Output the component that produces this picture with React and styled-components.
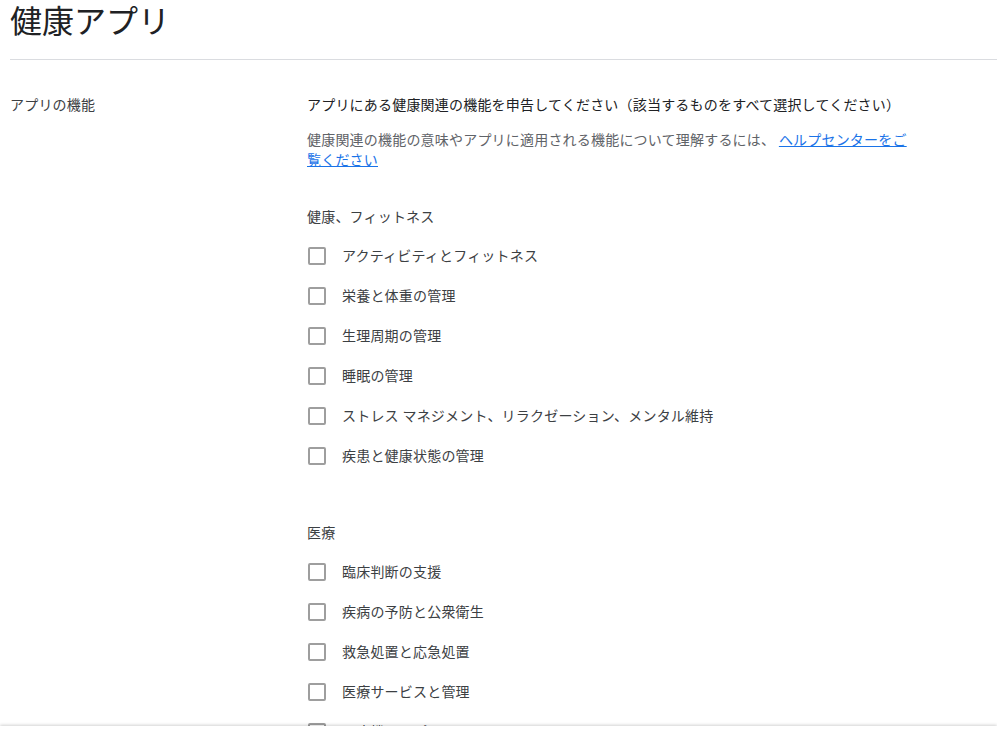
import React, { useState } from "react";
import styled, { createGlobalStyle } from "styled-components";

const GlobalStyle = createGlobalStyle`
  body {
    margin: 0;
    background: #fff;
    font-family: Roboto, "Noto Sans CJK JP", sans-serif;
    color: #202124;
  }
`;

const groups = [
  {
    title: "健康、フィットネス",
    items: [
      "アクティビティとフィットネス",
      "栄養と体重の管理",
      "生理周期の管理",
      "睡眠の管理",
      "ストレス マネジメント、リラクゼーション、メンタル維持",
      "疾患と健康状態の管理",
    ],
  },
  {
    title: "医療",
    items: [
      "臨床判断の支援",
      "疾病の予防と公衆衛生",
      "救急処置と応急処置",
      "医療サービスと管理",
      "医療機器アプリ",
    ],
  },
];

export default function App() {
  const [checked, setChecked] = useState({});
  const toggle = (key) => setChecked((c) => ({ ...c, [key]: !c[key] }));

  return (
    <>
      <GlobalStyle />
      <Page>
        <Header>
          <h1>健康アプリ</h1>
        </Header>
        <Section>
          <Label>アプリの機能</Label>
          <Content>
            <Lead>
              アプリにある健康関連の機能を申告してください（該当するものをすべて選択してください）
            </Lead>
            <Help>
              健康関連の機能の意味やアプリに適用される機能について理解するには、{" "}
              <a href="#help">ヘルプセンターをご覧ください</a>
            </Help>
            {groups.map((group, gi) => (
              <Group key={group.title} $first={gi === 0}>
                <GroupTitle>{group.title}</GroupTitle>
                {group.items.map((item) => {
                  const key = group.title + item;
                  return (
                    <Option key={key} onClick={() => toggle(key)}>
                      <Box $checked={!!checked[key]} />
                      <span>{item}</span>
                    </Option>
                  );
                })}
              </Group>
            ))}
          </Content>
        </Section>
      </Page>
      <Footer />
    </>
  );
}

const Page = styled.div`
  padding: 0 0 60px 10px;
`;

const Header = styled.div`
  height: 59px;
  border-bottom: 1px solid #dadce0;
  h1 {
    margin: 0;
    font-size: 32px;
    font-weight: 400;
    line-height: 44px;
    color: #202124;
  }
`;

const Section = styled.div`
  display: grid;
  grid-template-columns: 297px 608px;
  padding-top: 35px;
  font-size: 14px;
  line-height: 20px;
  letter-spacing: 0.2px;
  color: #3c4043;
`;

const Label = styled.div`
  color: #3c4043;
`;

const Content = styled.div`
  display: flex;
  flex-direction: column;
`;

const Lead = styled.p`
  margin: 0;
  color: #202124;
`;

const Help = styled.p`
  margin: 15px 0 0;
  color: #5f6368;
  a {
    color: #1a73e8;
    text-decoration: underline;
  }
`;

const Group = styled.div`
  margin-top: ${(p) => (p.$first ? "37px" : "47px")};
  display: flex;
  flex-direction: column;
`;

const GroupTitle = styled.div`
  margin-bottom: 9px;
  color: #3c4043;
`;

const Option = styled.label`
  display: flex;
  align-items: center;
  gap: 16px;
  height: 40px;
  cursor: pointer;
  color: #3c4043;
`;

const Box = styled.span`
  flex: none;
  width: 14px;
  height: 14px;
  margin-left: 1px;
  border: 2px solid ${(p) => (p.$checked ? "#1a73e8" : "#9e9e9e")};
  border-radius: 2px;
  background: ${(p) => (p.$checked ? "#1a73e8" : "#fff")};
`;

const Footer = styled.div`
  position: fixed;
  left: 0;
  right: 0;
  bottom: 0;
  height: 20px;
  background: #fff;
  box-shadow: 0 -1px 3px rgba(0, 0, 0, 0.18);
`;
